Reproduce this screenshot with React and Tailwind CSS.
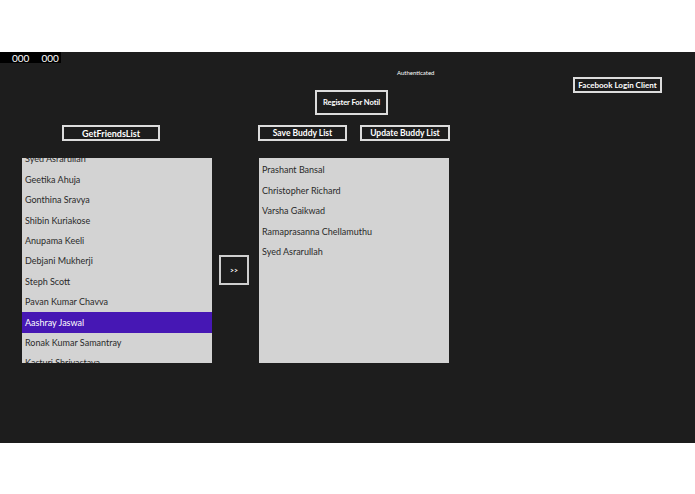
import React from 'react';

const friends = [
    'Syed Asrarullah',
    'Geetika Ahuja',
    'Gonthina Sravya',
    'Shibin Kuriakose',
    'Anupama Keeli',
    'Debjani Mukherji',
    'Steph Scott',
    'Pavan Kumar Chavva',
    'Aashray Jaswal',
    'Ronak Kumar Samantray',
    'Kasturi Shrivastava',
];

const buddies = [
    'Prashant Bansal',
    'Christopher Richard',
    'Varsha Gaikwad',
    'Ramaprasanna Chellamuthu',
    'Syed Asrarullah',
];

const font = { fontFamily: 'Lato, "Segoe UI", sans-serif' };

const Button = ({ children, className }) => (
    <button
        className={`flex items-center justify-center border-2 border-[#dcdcdc] bg-[#1d1d1d] text-white font-bold leading-none whitespace-nowrap overflow-hidden ${className}`}
    >
        {children}
    </button>
);

const ListBox = ({ items, selected, offset }) => (
    <div className="w-[190px] h-[205px] bg-[#d3d3d3] overflow-hidden">
        <div className={offset}>
            {items.map(name => (
                <div
                    key={name}
                    className={`h-[20.4px] flex items-center px-[3px] text-[9px] whitespace-nowrap ${name === selected ? 'bg-[#4617b4] text-white' : 'text-[#2a2a2a]'}`}
                >
                    {name}
                </div>
            ))}
        </div>
    </div>
);

const App = () => {
    return (
        <div className="w-[695px] h-[494px] bg-white" style={font}>
            <div className="h-[52px]" />
            <div className="h-[391px] bg-[#1d1d1d]">
                <div className="w-[61px] h-[11px] bg-black flex items-center text-white text-[10px] leading-none">
                    <span className="ml-[12px]">000</span>
                    <span className="ml-[12px]">000</span>
                </div>

                <div className="flex items-start h-[52px]">
                    <Button className="ml-[315px] mt-[27px] w-[73px] h-[25px] text-[7.6px] tracking-[-0.1px]">Register For Notil</Button>
                    <span className="ml-[9px] mt-[7px] text-white text-[6px] leading-none">Authenticated</span>
                    <Button className="ml-auto mr-[33px] mt-[14px] w-[89px] h-[16px] text-[8px]">Facebook Login Client</Button>
                </div>

                <div className="flex mt-[10px]">
                    <Button className="ml-[62px] w-[98px] h-[16px] text-[9px]">GetFriendsList</Button>
                    <Button className="ml-[98px] w-[89px] h-[16px] text-[8.5px]">Save Buddy List</Button>
                    <Button className="ml-[13px] w-[90px] h-[16px] text-[8.5px]">Update Buddy List</Button>
                </div>

                <div className="flex items-start mt-[17px]">
                    <div className="ml-[22px]">
                        <ListBox items={friends} selected="Aashray Jaswal" offset="-mt-[9px]" />
                    </div>
                    <button className="ml-[7px] mt-[97px] w-[30px] h-[30px] border-2 border-[#cfcfcf] text-white text-[7px] font-bold flex items-center justify-center">
                        &gt;&gt;
                    </button>
                    <div className="ml-[10px]">
                        <ListBox items={buddies} offset="mt-[2px]" />
                    </div>
                </div>
            </div>
        </div>
    );
};

export default App;
